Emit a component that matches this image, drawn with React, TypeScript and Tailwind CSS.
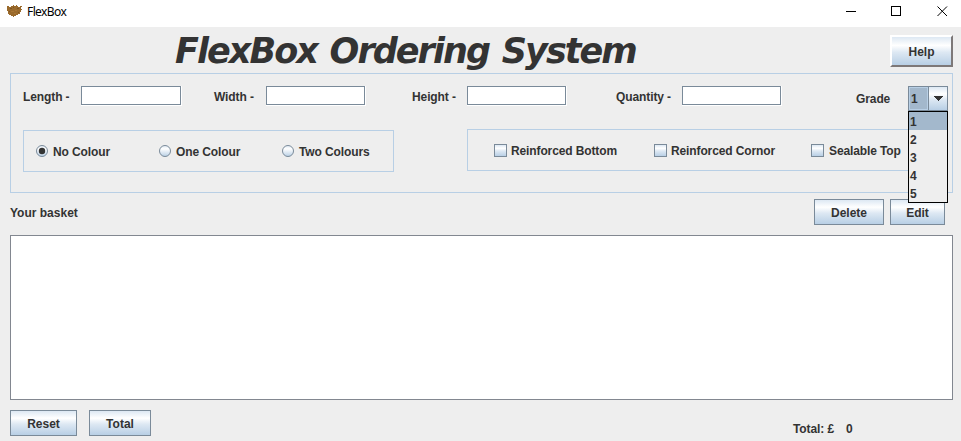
import React from "react";

const METAL = "bg-[linear-gradient(180deg,#dde8f3_0%,#ffffff_30%,#dde8f3_55%,#b8cfe5_100%)]";

function Field({ label, labelClass, inputClass }: { label: string; labelClass: string; inputClass: string }) {
  return (
    <label className="flex h-5 shrink-0 items-center">
      <span className={`shrink-0 pt-[2px] tracking-[-0.1px] ${labelClass}`}>{label}</span>
      <span className={`flex h-5 shrink-0 border-r border-b border-white ${inputClass}`}>
        <input className="h-[19px] w-full border border-[#7a8a99] bg-white outline-none" />
      </span>
    </label>
  );
}

function Radio({ label, checked, className }: { label: string; checked?: boolean; className: string }) {
  return (
    <div className={`flex shrink-0 items-center ${className}`}>
      <svg width="12" height="12" viewBox="0 0 12 12" className="mr-[5px] shrink-0">
        <defs>
          <linearGradient id="radioFill" x1="0" y1="0" x2="0" y2="1">
            <stop offset="0" stopColor="#dde8f3" />
            <stop offset="0.3" stopColor="#ffffff" />
            <stop offset="1" stopColor="#b8cfe5" />
          </linearGradient>
        </defs>
        <circle cx="6" cy="6" r="5.5" fill="url(#radioFill)" stroke="#7a8a99" />
        {checked && <circle cx="6" cy="6" r="3.2" fill="#333333" />}
      </svg>
      <span className="pt-px tracking-[-0.1px]">{label}</span>
    </div>
  );
}

function Check({ label, className, textClass }: { label: string; className: string; textClass: string }) {
  return (
    <div className={`flex shrink-0 items-center ${className}`}>
      <span className={`h-[13px] w-[13px] shrink-0 border border-[#7a8a99] ${METAL}`} />
      <span className={`pt-[2px] tracking-[-0.12px] ${textClass}`}>{label}</span>
    </div>
  );
}

function Button({ label, className }: { label: string; className: string }) {
  return (
    <button className={`flex h-[26px] shrink-0 items-center justify-center border border-[#7a8a99] pt-[2px] font-bold ${METAL} ${className}`}>
      {label}
    </button>
  );
}

export default function App() {
  return (
    <div className="flex h-[441px] w-[961px] flex-col overflow-hidden bg-[#eeeeee] font-['Liberation_Sans',Arial,sans-serif] text-[12px] leading-[14px] font-bold whitespace-pre text-[#333333]">
      <header className="flex h-[27px] shrink-0 items-start bg-white font-normal text-black">
        <svg width="15" height="13" viewBox="0 0 15 13" className="mt-[5px] ml-[7px] shrink-0" shapeRendering="crispEdges">
          <path d="M0 1h2v1h2v-1h2v-1h1v1h2v-1h1v1h1v1h2v-1h2v1h-1v2h1v1h-1v2h-1v2h-2v1h-2v1h-2v1h-1v-1h-2v-1h-2v-1h-1v-3h-1v-2h-1v-1h1v-1h-1z" fill="#9a6a2c" />
          <path d="M3 3h2v1h-2zM10 3h2v1h-2zM6 2h1v1h-1zM2 6h1v1h-1zM11 7h1v1h-1z" fill="#7d5322" />
          <path d="M4 6h3v1h-3zM8 5h2v1h-2zM7 8h2v1h-2z" fill="#a97634" />
        </svg>
        <span className="mt-[5px] ml-[5px] font-['Noto_Sans','Open_Sans',sans-serif] text-[12px] tracking-[-0.6px]">FlexBox</span>
        <svg width="104" height="12" viewBox="0 0 104 12" className="mt-[5px] mr-[11px] ml-auto shrink-0" fill="none" stroke="black">
          <path d="M0 6.5h10M45.5 1.5h9v9h-9z" shapeRendering="crispEdges" />
          <path d="M91.5 1.5l9.5 9.5M101 1.5l-9.5 9.5" />
        </svg>
      </header>

      <div className="flex h-[46px] shrink-0 items-start pr-2 pl-[175px]">
        <h1 className="mt-[3px] font-['DejaVu_Sans',sans-serif] text-[35px] leading-[42px] font-bold tracking-[-1.95px] [word-spacing:2.5px] italic">FlexBox Ordering System</h1>
        <button className={`mt-2 ml-auto flex h-8 w-[63px] shrink-0 items-center justify-center border-2 border-t-white border-r-[#7d7878] border-b-[#7d7878] border-l-white pt-[2px] font-bold ${METAL}`}>Help</button>
      </div>

      <section className="mr-2 ml-[10px] flex h-[120px] shrink-0 flex-col border border-[#b8cfe5] pl-3">
        <div className="flex h-[55px] shrink-0 items-start pt-3">
          <Field label="Length -" labelClass="w-[58px]" inputClass="w-[101px]" />
          <Field label="Width -" labelClass="ml-[32px] w-[52px]" inputClass="w-[100px]" />
          <Field label="Height -" labelClass="ml-[46px] w-[55px]" inputClass="w-[100px]" />
          <Field label="Quantity -" labelClass="ml-[49px] w-[66px]" inputClass="w-[100px]" />
          <span className="mt-[6px] ml-[74px] w-[52px] shrink-0 tracking-[-0.1px]">Grade</span>
          <div className="relative flex h-[25px] w-10 shrink-0 border border-[#7a8a99]">
            <span className="w-[19px] border border-[#b8cfe5] bg-[#a3b8cc] pt-[4px] pl-px">1</span>
            <span className={`flex flex-1 items-center justify-center border-l border-[#7a8a99] ${METAL}`}>
              <svg width="10" height="5" viewBox="0 0 10 5" shapeRendering="crispEdges"><path d="M0 0h10L5 5z" fill="#333333" /></svg>
            </span>
            <ul className="absolute top-6 -left-px z-10 h-[92px] w-10 border border-black bg-[#eeeeee]">
              {["1", "2", "3", "4", "5"].map((n) => (
                <li key={n} className={`h-[18px] pt-[3px] pl-px ${n === "1" ? "bg-[#a3b8cc]" : ""}`}>{n}</li>
              ))}
            </ul>
          </div>
        </div>
        <div className="flex shrink-0 items-start">
          <div className="mt-px flex h-[42px] w-[371px] items-center border border-[#b8cfe5] pl-3">
            <Radio label="No Colour" checked className="w-[123px]" />
            <Radio label="One Colour" className="w-[123px]" />
            <Radio label="Two Colours" className="" />
          </div>
          <div className="ml-[73px] flex h-[42px] w-[458px] items-center border border-[#b8cfe5] pl-[26px]">
            <Check label="Reinforced Bottom" className="w-[160px]" textClass="ml-1" />
            <Check label="Reinforced Cornor" className="w-[157px]" textClass="ml-1" />
            <Check label="Sealable Top" className="" textClass="ml-[5px]" />
          </div>
        </div>
      </section>

      <div className="flex h-[42px] shrink-0 items-start pt-[6px] pr-4 pl-[10px]">
        <span className="mt-[7px]">Your basket</span>
        <Button label="Delete" className="ml-auto w-[70px]" />
        <Button label="Edit" className="ml-[6px] w-[55px]" />
      </div>
      <div className="mr-2 ml-[10px] h-[165px] shrink-0 border border-[#828790] bg-white" />
      <footer className="flex items-start pt-[10px] pl-[10px]">
        <Button label="Reset" className="w-[67px]" />
        <Button label="Total" className="ml-3 w-[62px]" />
        <span className="mt-3 ml-[642px] w-[53px] tracking-[-0.1px]">Total: £</span>
        <span className="mt-3">0</span>
      </footer>
    </div>
  );
}
